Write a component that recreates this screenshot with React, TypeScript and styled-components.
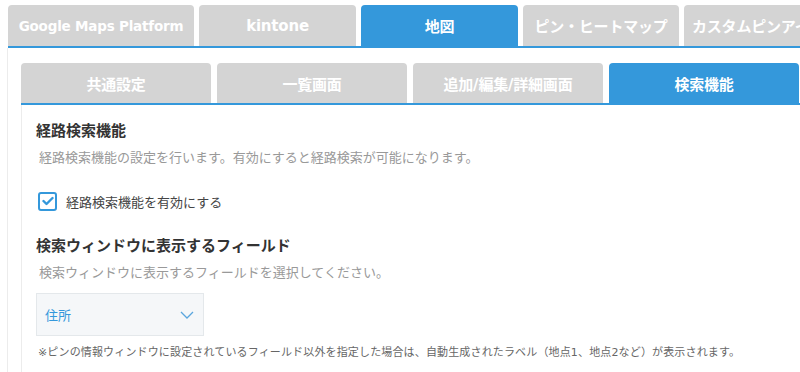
import styled, { createGlobalStyle } from "styled-components";

const GlobalStyle = createGlobalStyle`
  html, body {
    margin: 0;
    padding: 0;
    background: #ffffff;
  }
  body {
    font-family: "DejaVu Sans", "Noto Sans CJK JP", sans-serif;
    color: #333;
    overflow: hidden;
  }
`;

const BLUE = "#3498db";

const Page = styled.div`
  width: 800px;
  height: 372px;
  overflow: hidden;
  padding-top: 5px;
  box-sizing: border-box;
`;

const TabBar = styled.div<{ $inner?: boolean }>`
  display: flex;
  gap: ${(p) => (p.$inner ? "6px" : "5px")};
  margin-left: ${(p) => (p.$inner ? "13px" : "8px")};
  border-bottom: 2px solid ${BLUE};
  white-space: nowrap;
  overflow: hidden;
`;

const Tab = styled.div<{ $active?: boolean; $w: number; $h: number; $fs?: number; $left?: boolean }>`
  flex: 0 0 ${(p) => p.$w}px;
  height: ${(p) => p.$h}px;
  box-sizing: border-box;
  display: flex;
  align-items: center;
  justify-content: ${(p) => (p.$left ? "flex-start" : "center")};
  padding-left: ${(p) => (p.$left ? "8px" : "0")};
  background: ${(p) => (p.$active ? BLUE : "#d4d4d4")};
  color: #fff;
  font-weight: bold;
  font-size: ${(p) => p.$fs ?? 15}px;
  border-radius: 4px 4px 0 0;
  overflow: hidden;
  letter-spacing: -0.2px;
`;

const Panel = styled.div`
  margin-left: 7px;
  border-left: 1px solid #ececec;
  padding-top: 15px;
`;

const Body = styled.div`
  margin-left: 13px;
  border-left: 1px solid #ececec;
  padding: 16px 0 0 14px;
  height: 300px;
`;

const Heading = styled.h2`
  margin: 0;
  font-size: 15px;
  line-height: 20px;
  font-weight: bold;
  color: #333;
`;

const Desc = styled.p`
  margin: 7px 0 0 3px;
  font-size: 13px;
  line-height: 20px;
  color: #999;
`;

const CheckRow = styled.label`
  display: flex;
  align-items: center;
  gap: 9px;
  margin: 23px 0 0 2px;
  height: 20px;
  font-size: 13px;
  color: #444;
`;

const Box = styled.span`
  width: 19px;
  height: 19px;
  box-sizing: border-box;
  border: 2px solid ${BLUE};
  border-radius: 3px;
  display: flex;
  align-items: center;
  justify-content: center;
  background: #fff;
`;

const SubHeading = styled(Heading)`
  margin-top: 25px;
`;

const Select = styled.div`
  margin-top: 10px;
  width: 168px;
  height: 43px;
  box-sizing: border-box;
  border: 1px solid #e4e8eb;
  background: #f5f7f9;
  display: flex;
  align-items: center;
  justify-content: space-between;
  padding: 0 9px 0 8px;
  font-size: 13px;
  color: ${BLUE};
`;

const Note = styled.p`
  margin: 9px 0 0 2px;
  font-size: 11px;
  line-height: 16px;
  letter-spacing: 0.15px;
  color: #666;
  white-space: nowrap;
`;

export default function App() {
  return (
    <Page>
      <GlobalStyle />
      <TabBar>
        <Tab $w={186} $h={41} $fs={13.5}>
          Google Maps Platform
        </Tab>
        <Tab $w={157} $h={41}>kintone</Tab>
        <Tab $w={157} $h={41} $active>
          地図
        </Tab>
        <Tab $w={156} $h={41}>ピン・ヒートマップ</Tab>
        <Tab $w={156} $h={41} $left>
          カスタムピンアイコン
        </Tab>
      </TabBar>
      <Panel>
        <TabBar $inner>
          <Tab $w={190} $h={40}>共通設定</Tab>
          <Tab $w={190} $h={40}>一覧画面</Tab>
          <Tab $w={190} $h={40}>追加/編集/詳細画面</Tab>
          <Tab $w={190} $h={40} $active>
            検索機能
          </Tab>
        </TabBar>
        <Body>
          <Heading>経路検索機能</Heading>
          <Desc>経路検索機能の設定を行います。有効にすると経路検索が可能になります。</Desc>
          <CheckRow>
            <Box>
              <svg width="12" height="10" viewBox="0 0 12 10">
                <polyline
                  points="1.5,5 4.5,8 10.5,2"
                  fill="none"
                  stroke={BLUE}
                  strokeWidth="2.4"
                  strokeLinecap="round"
                  strokeLinejoin="round"
                />
              </svg>
            </Box>
            経路検索機能を有効にする
          </CheckRow>
          <SubHeading>検索ウィンドウに表示するフィールド</SubHeading>
          <Desc>検索ウィンドウに表示するフィールドを選択してください。</Desc>
          <Select>
            住所
            <svg width="14" height="8" viewBox="0 0 14 8">
              <polyline
                points="1,1 7,7 13,1"
                fill="none"
                stroke="#5aa6de"
                strokeWidth="1.3"
              />
            </svg>
          </Select>
          <Note>
            ※ピンの情報ウィンドウに設定されているフィールド以外を指定した場合は、自動生成されたラベル（地点1、地点2など）が表示されます。
          </Note>
        </Body>
      </Panel>
    </Page>
  );
}
